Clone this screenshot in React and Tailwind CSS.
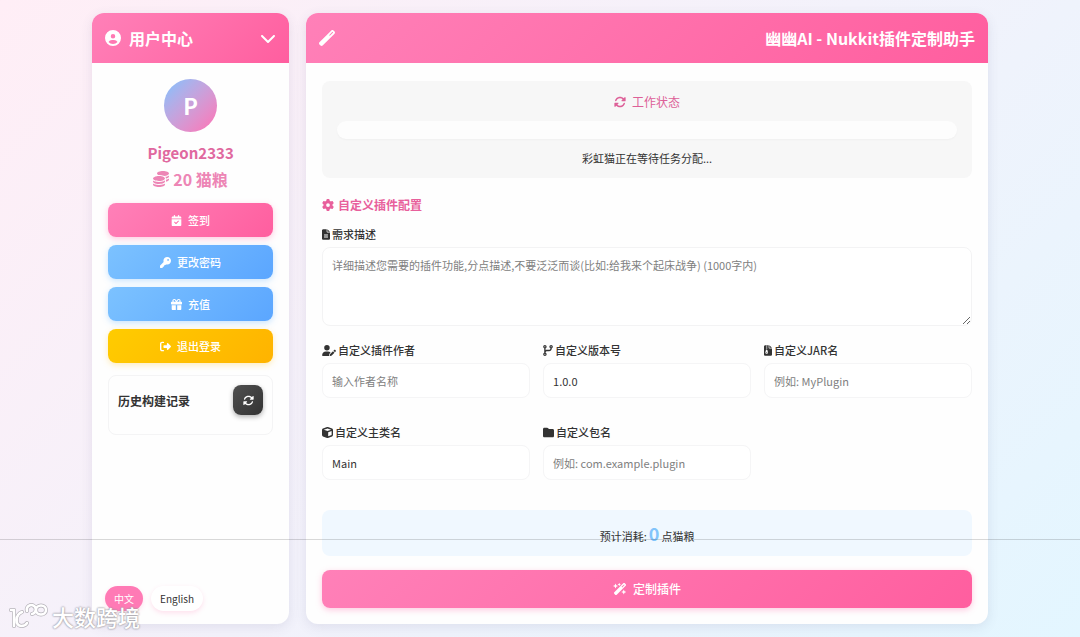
import React, { useState } from "react";
import {
  FaCalendarCheck,
  FaChevronDown,
  FaCircleUser,
  FaCodeBranch,
  FaCoins,
  FaCube,
  FaFileLines,
  FaFileZipper,
  FaFolder,
  FaGear,
  FaGift,
  FaKey,
  FaRightFromBracket,
  FaRotate,
  FaUserPen,
  FaWandMagic,
  FaWandMagicSparkles,
} from "react-icons/fa6";

const actions = [
  {
    label: "签到",
    icon: FaCalendarCheck,
    color: "from-[#ff80b8] to-[#ff5e9f] shadow-[0_2px_6px_rgba(255,105,170,0.35)]",
  },
  {
    label: "更改密码",
    icon: FaKey,
    color: "from-[#7cc2ff] to-[#5ba6ff] shadow-[0_2px_6px_rgba(100,180,255,0.35)]",
  },
  {
    label: "充值",
    icon: FaGift,
    color: "from-[#7cc2ff] to-[#5ba6ff] shadow-[0_2px_6px_rgba(100,180,255,0.35)]",
  },
  {
    label: "退出登录",
    icon: FaRightFromBracket,
    color: "from-[#ffcc00] to-[#ffb300] shadow-[0_2px_6px_rgba(255,200,60,0.35)]",
  },
];

// the glyphs are not square, so each icon carries its own width
const fields = [
  { id: "author", label: "自定义插件作者", icon: FaUserPen, iconWidth: "w-[14px]", placeholder: "输入作者名称" },
  { id: "version", label: "自定义版本号", icon: FaCodeBranch, iconWidth: "w-[10px]", value: "1.0.0" },
  { id: "jar", label: "自定义JAR名", icon: FaFileZipper, iconWidth: "w-2", placeholder: "例如: MyPlugin" },
  { id: "mainClass", label: "自定义主类名", icon: FaCube, iconWidth: "w-[11px]", value: "Main" },
  { id: "package", label: "自定义包名", icon: FaFolder, iconWidth: "w-[11px]", placeholder: "例如: com.example.plugin" },
];

function Field({ field }) {
  const Icon = field.icon;
  return (
    <div>
      <label htmlFor={field.id} className="flex items-center gap-0.5 h-4 mb-[5px] font-medium">
        <Icon className={field.iconWidth} /> {field.label}
      </label>
      <input
        id={field.id}
        type="text"
        defaultValue={field.value}
        placeholder={field.placeholder}
        className="block w-full h-[35px] px-[9px] border border-[#f5f5f6] rounded-lg bg-white placeholder:text-[#808080] outline-none focus:border-[#ff80b8]"
      />
    </div>
  );
}

function Sidebar({ lang, setLang }) {
  return (
    <aside className="w-[22%] shrink-0 flex flex-col rounded-xl overflow-hidden bg-[#fefefe] shadow-[0_3px_12px_rgba(80,80,120,0.12)]">
      <header className="h-[50px] px-[13px] flex items-center justify-between text-white bg-linear-135 from-[#ff80b8] to-[#ff5e9f]">
        <h2 className="flex items-center gap-2 text-base font-bold">
          <FaCircleUser /> 用户中心
        </h2>
        <button type="button" aria-label="收起">
          <FaChevronDown className="size-4" />
        </button>
      </header>

      <div className="flex-1 px-4 pt-4 flex flex-col">
        <div className="size-[53px] mx-auto rounded-full flex items-center justify-center text-[22px] font-bold text-white bg-linear-135 from-[#78c2ff] to-[#ff6fb4]">
          P
        </div>
        <p className="mt-2 h-[26px] leading-[26px] text-center text-[15px] font-bold text-[#e0689f]">
          Pigeon2333
        </p>
        <p className="h-[26px] flex items-center justify-center gap-1 text-base font-bold text-[#ed85b5]">
          <FaCoins /> 20 猫粮
        </p>

        <div className="mt-[11px] flex flex-col gap-2">
          {actions.map(({ label, icon: Icon, color }) => (
            <button
              key={label}
              type="button"
              className={`h-[34px] rounded-lg flex items-center justify-center gap-1.5 font-medium text-white bg-linear-135 ${color}`}
            >
              <Icon /> {label}
            </button>
          ))}
        </div>

        <section className="mt-3 h-[60px] pt-[9px] px-[9px] flex items-start justify-between rounded-lg border border-[#f4f4f5]">
          <h3 className="leading-8 text-xs font-bold">历史构建记录</h3>
          <button
            type="button"
            aria-label="刷新"
            className="size-[30px] rounded-lg flex items-center justify-center text-white bg-linear-135 from-[#505050] to-[#333333] shadow-[0_2px_5px_rgba(0,0,0,0.3)]"
          >
            <FaRotate />
          </button>
        </section>
      </div>

      <div className="px-[13px] pb-[13px] flex gap-2 text-[10px]">
        {["中文", "English"].map((name) => (
          <button
            key={name}
            type="button"
            onClick={() => setLang(name)}
            className={
              lang === name
                ? "h-[25px] px-[9px] rounded-full text-white bg-[#ff7ab5] shadow-[0_2px_5px_rgba(255,105,170,0.2)]"
                : "h-[25px] px-[9px] rounded-full bg-white shadow-[0_2px_5px_rgba(255,105,170,0.2)]"
            }
          >
            {name}
          </button>
        ))}
      </div>
    </aside>
  );
}

function Workspace() {
  return (
    <main className="flex-1 min-w-0 flex flex-col rounded-xl overflow-hidden bg-[#fefefe] shadow-[0_3px_12px_rgba(80,80,120,0.12)]">
      <header className="h-[50px] px-[13px] flex items-center justify-between text-white bg-linear-135 from-[#ff80b8] to-[#ff5e9f]">
        <FaWandMagic className="size-4" />
        <h1 className="text-base font-bold">幽幽AI - Nukkit插件定制助手</h1>
      </header>

      <div className="flex-1 px-4 pt-[18px] pb-4 flex flex-col">
        <section className="px-[15px] pt-3 pb-[11px] rounded-lg bg-[#f7f7f7] text-center">
          <h2 className="h-[18px] flex items-center justify-center gap-1.5 text-xs text-[#dd6098]">
            <FaRotate /> 工作状态
          </h2>
          <div
            role="progressbar"
            aria-valuenow={0}
            className="mt-[10px] h-[18px] rounded-full bg-[#fdfdfd] shadow-[0_1px_2px_rgba(0,0,0,0.03)]"
          />
          <p className="mt-[10px] leading-[18px]">彩虹猫正在等待任务分配...</p>
        </section>

        <form className="flex-1 flex flex-col">
          <h3 className="mt-[18px] h-[18px] flex items-center gap-1 text-xs font-bold text-[#e8609c]">
            <FaGear /> 自定义插件配置
          </h3>
          <label htmlFor="desc" className="mt-3 mb-[5px] h-4 flex items-center gap-0.5 font-medium">
            <FaFileLines className="w-2" /> 需求描述
          </label>
          <textarea
            id="desc"
            placeholder="详细描述您需要的插件功能,分点描述,不要泛泛而谈(比如:给我来个起床战争) (1000字内)"
            className="block w-full h-[79px] px-[9px] py-2 leading-[18px] resize-y border border-[#f3f3f4] rounded-lg bg-white placeholder:text-[#808080] outline-none focus:border-[#ff80b8]"
          />

          <div className="mt-4 grid grid-cols-3 gap-x-[13px] gap-y-[26px]">
            {fields.map((field) => (
              <Field key={field.id} field={field} />
            ))}
          </div>

          <div className="mt-[30px] h-[46px] pt-0.5 flex items-center justify-center rounded-lg bg-[#f0f8ff]">
            <p className="flex items-baseline gap-0.5 leading-6">
              预计消耗: <span className="text-lg leading-6 font-bold text-[#82c4fb]">0</span> 点猫粮
            </p>
          </div>

          <button
            type="button"
            className="mt-[14px] h-[38px] flex items-center justify-center gap-1.5 rounded-lg text-xs font-medium text-white bg-linear-135 from-[#ff80b8] to-[#ff5e9f] shadow-[0_2px_6px_rgba(255,105,170,0.35)]"
          >
            <FaWandMagicSparkles className="w-[14px]" /> 定制插件
          </button>
        </form>
      </div>
    </main>
  );
}

function Watermark() {
  const logo =
    "M3 8h3v16M14 10c-7 3-7 13-1 14 3 0 5-1 6-3M19 9a4.5 4.5 0 1 1 5 3M28 8a5 4.5 0 1 1 10 0a5 4.5 0 1 1-10 0";
  return (
    <div className="absolute left-2 bottom-1 flex items-start gap-1 pointer-events-none">
      <svg width="40" height="31" viewBox="0 0 40 31" fill="none" strokeLinecap="round" strokeLinejoin="round">
        <path d={logo} stroke="#b4b1b8" strokeWidth="4" />
        <path d={logo} stroke="#ffffff" strokeWidth="2.6" />
      </svg>
      <span className="text-[22px] leading-7 font-medium text-white [text-shadow:0_0_2px_#9b98a0,0_0_2px_#9b98a0]">
        大数跨境
      </span>
    </div>
  );
}

export default function App() {
  const [lang, setLang] = useState("中文");

  return (
    <div className="relative min-h-screen py-[13px] flex justify-center text-[11px] text-[#333333] bg-linear-135 from-[#ffeef6] via-[#f3f2fb] to-[#e3f6ff] font-['Noto_Sans_CJK_SC','Noto_Sans',sans-serif]">
      <div className="w-full max-w-4xl flex gap-[17px]">
        <Sidebar lang={lang} setLang={setLang} />
        <Workspace />
      </div>
      <div className="absolute inset-x-0 bottom-[97px] h-px bg-black/15 pointer-events-none" />
      <Watermark />
    </div>
  );
}
